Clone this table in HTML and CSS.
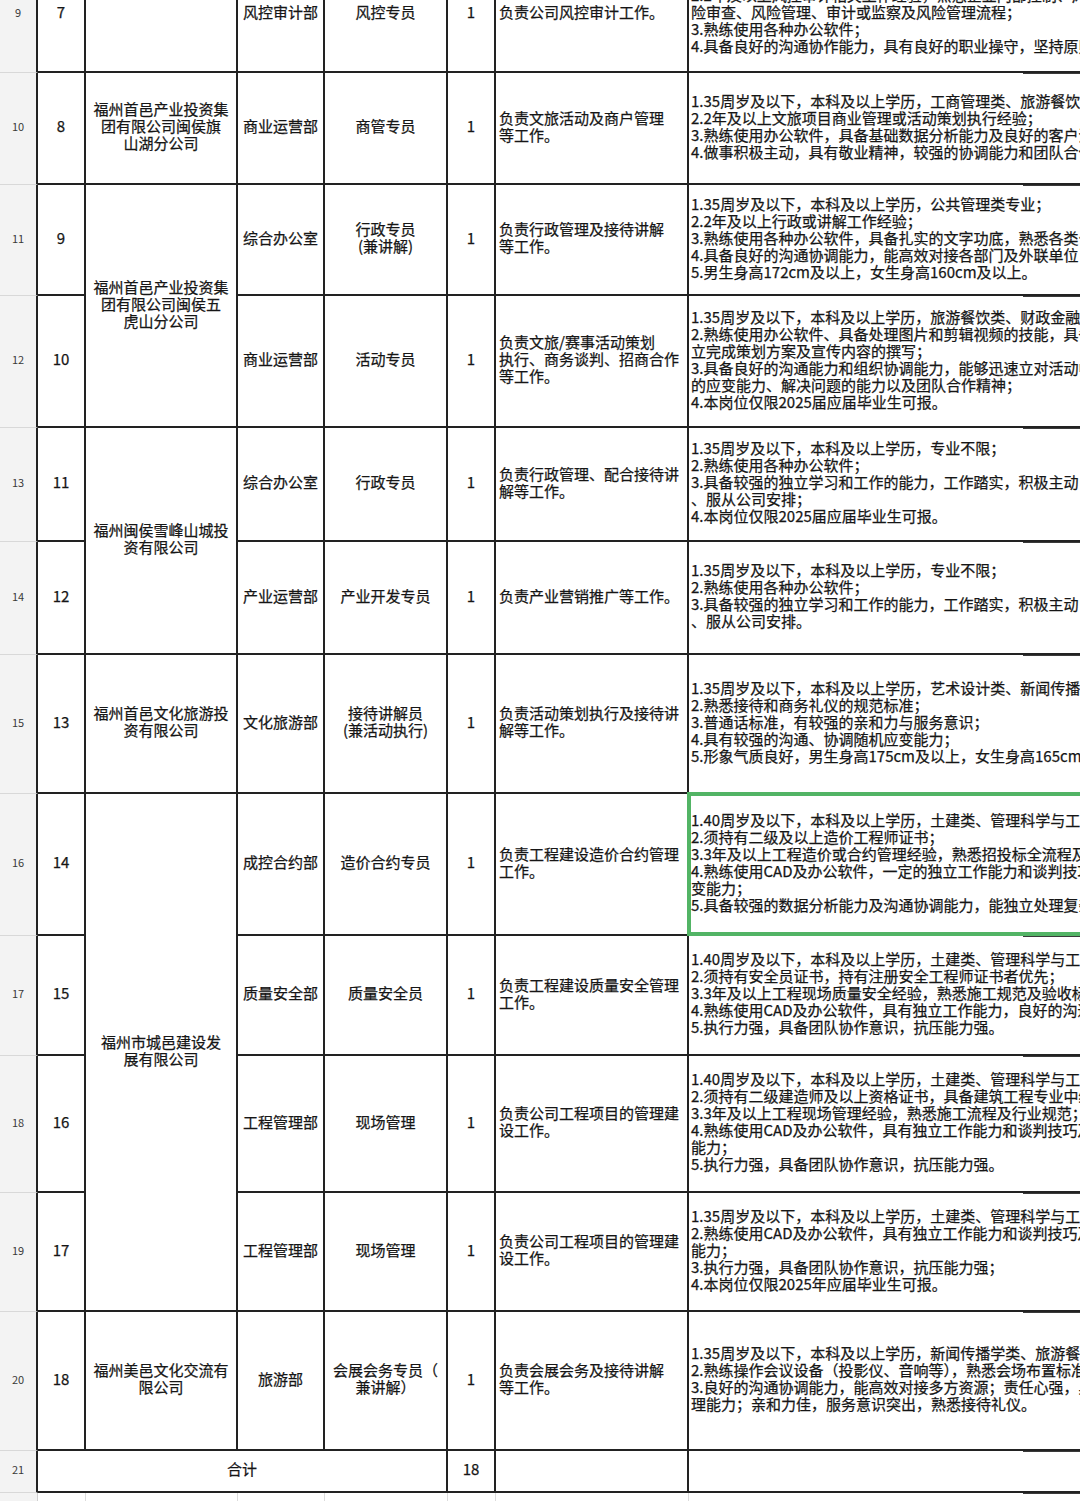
FILE: index.html
```html
<!DOCTYPE html>
<html lang="zh-CN">
<head>
<meta charset="utf-8">
<title>招聘岗位表</title>
<link rel="stylesheet" href="styles.css">
</head>
<body>
<div class="sheet">
  <!-- row 9 -->
  <div class="rh">9</div>
  <div class="c ctr">7</div>
  <div class="c ctr"></div>
  <div class="c ctr">风控审计部</div>
  <div class="c ctr">风控专员</div>
  <div class="c ctr">1</div>
  <div class="c duty">负责公司风控审计工作。</div>
  <div class="c req first">1.35周岁及以下，本科及以上学历，审计学、财务管理、法学类专业；<br>2.2年及以上风控审计相关工作经验，熟悉企业内部控制、风<br>险审查、风险管理、审计或监察及风险管理流程；<br>3.熟练使用各种办公软件；<br>4.具备良好的沟通协作能力，具有良好的职业操守，坚持原则。</div>

  <!-- row 10 -->
  <div class="rh">10</div>
  <div class="c ctr">8</div>
  <div class="c ctr">福州首邑产业投资集<br>团有限公司闽侯旗<br>山湖分公司</div>
  <div class="c ctr">商业运营部</div>
  <div class="c ctr">商管专员</div>
  <div class="c ctr">1</div>
  <div class="c duty">负责文旅活动及商户管理<br>等工作。</div>
  <div class="c req">1.35周岁及以下，本科及以上学历，工商管理类、旅游餐饮类专业；<br>2.2年及以上文旅项目商业管理或活动策划执行经验；<br>3.熟练使用办公软件，具备基础数据分析能力及良好的客户沟通能力；<br>4.做事积极主动，具有敬业精神，较强的协调能力和团队合作精神。</div>

  <!-- row 11 -->
  <div class="rh">11</div>
  <div class="c ctr">9</div>
  <div class="c ctr span2">福州首邑产业投资集<br>团有限公司闽侯五<br>虎山分公司</div>
  <div class="c ctr">综合办公室</div>
  <div class="c ctr">行政专员<br>(兼讲解)</div>
  <div class="c ctr">1</div>
  <div class="c duty">负责行政管理及接待讲解<br>等工作。</div>
  <div class="c req">1.35周岁及以下，本科及以上学历，公共管理类专业；<br>2.2年及以上行政或讲解工作经验；<br>3.熟练使用各种办公软件，具备扎实的文字功底，熟悉各类公文写作；<br>4.具备良好的沟通协调能力，能高效对接各部门及外联单位；<br>5.男生身高172cm及以上，女生身高160cm及以上。</div>

  <!-- row 12 -->
  <div class="rh">12</div>
  <div class="c ctr">10</div>
  <div class="c ctr">商业运营部</div>
  <div class="c ctr">活动专员</div>
  <div class="c ctr">1</div>
  <div class="c duty">负责文旅/赛事活动策划<br>执行、商务谈判、招商合作<br>等工作。</div>
  <div class="c req">1.35周岁及以下，本科及以上学历，旅游餐饮类、财政金融类专业；<br>2.熟练使用办公软件、具备处理图片和剪辑视频的技能，具备独<br>立完成策划方案及宣传内容的撰写；<br>3.具备良好的沟通能力和组织协调能力，能够迅速立对活动中突发<br>的应变能力、解决问题的能力以及团队合作精神；<br>4.本岗位仅限2025届应届毕业生可报。</div>

  <!-- row 13 -->
  <div class="rh">13</div>
  <div class="c ctr">11</div>
  <div class="c ctr span2">福州闽侯雪峰山城投<br>资有限公司</div>
  <div class="c ctr">综合办公室</div>
  <div class="c ctr">行政专员</div>
  <div class="c ctr">1</div>
  <div class="c duty">负责行政管理、配合接待讲<br>解等工作。</div>
  <div class="c req">1.35周岁及以下，本科及以上学历，专业不限；<br>2.熟练使用各种办公软件；<br>3.具备较强的独立学习和工作的能力，工作踏实，积极主动<br>、服从公司安排；<br>4.本岗位仅限2025届应届毕业生可报。</div>

  <!-- row 14 -->
  <div class="rh">14</div>
  <div class="c ctr">12</div>
  <div class="c ctr">产业运营部</div>
  <div class="c ctr">产业开发专员</div>
  <div class="c ctr">1</div>
  <div class="c duty">负责产业营销推广等工作。</div>
  <div class="c req">1.35周岁及以下，本科及以上学历，专业不限；<br>2.熟练使用各种办公软件；<br>3.具备较强的独立学习和工作的能力，工作踏实，积极主动<br>、服从公司安排。</div>

  <!-- row 15 -->
  <div class="rh">15</div>
  <div class="c ctr">13</div>
  <div class="c ctr">福州首邑文化旅游投<br>资有限公司</div>
  <div class="c ctr">文化旅游部</div>
  <div class="c ctr">接待讲解员<br>(兼活动执行)</div>
  <div class="c ctr">1</div>
  <div class="c duty">负责活动策划执行及接待讲<br>解等工作。</div>
  <div class="c req">1.35周岁及以下，本科及以上学历，艺术设计类、新闻传播学类专业；<br>2.熟悉接待和商务礼仪的规范标准；<br>3.普通话标准，有较强的亲和力与服务意识；<br>4.具有较强的沟通、协调随机应变能力；<br>5.形象气质良好，男生身高175cm及以上，女生身高165cm及以上。</div>

  <!-- row 16 -->
  <div class="rh">16</div>
  <div class="c ctr">14</div>
  <div class="c ctr span4">福州市城邑建设发<br>展有限公司</div>
  <div class="c ctr">成控合约部</div>
  <div class="c ctr">造价合约专员</div>
  <div class="c ctr">1</div>
  <div class="c duty">负责工程建设造价合约管理<br>工作。</div>
  <div class="c req selected">1.40周岁及以下，本科及以上学历，土建类、管理科学与工程类专业；<br>2.须持有二级及以上造价工程师证书；<br>3.3年及以上工程造价或合约管理经验，熟悉招投标全流程及合同管理；<br>4.熟练使用CAD及办公软件，一定的独立工作能力和谈判技巧及应<br>变能力；<br>5.具备较强的数据分析能力及沟通协调能力，能独立处理复杂问题。<span class="sel-box"></span></div>

  <!-- row 17 -->
  <div class="rh">17</div>
  <div class="c ctr">15</div>
  <div class="c ctr">质量安全部</div>
  <div class="c ctr">质量安全员</div>
  <div class="c ctr">1</div>
  <div class="c duty">负责工程建设质量安全管理<br>工作。</div>
  <div class="c req">1.40周岁及以下，本科及以上学历，土建类、管理科学与工程类专业；<br>2.须持有安全员证书，持有注册安全工程师证书者优先；<br>3.3年及以上工程现场质量安全经验，熟悉施工规范及验收标准；<br>4.熟练使用CAD及办公软件，具有独立工作能力，良好的沟通能力；<br>5.执行力强，具备团队协作意识，抗压能力强。</div>

  <!-- row 18 -->
  <div class="rh">18</div>
  <div class="c ctr">16</div>
  <div class="c ctr">工程管理部</div>
  <div class="c ctr">现场管理</div>
  <div class="c ctr">1</div>
  <div class="c duty">负责公司工程项目的管理建<br>设工作。</div>
  <div class="c req">1.40周岁及以下，本科及以上学历，土建类、管理科学与工程类专业；<br>2.须持有二级建造师及以上资格证书，具备建筑工程专业中级职称；<br>3.3年及以上工程现场管理经验，熟悉施工流程及行业规范；<br>4.熟练使用CAD及办公软件，具有独立工作能力和谈判技巧及应变<br>能力；<br>5.执行力强，具备团队协作意识，抗压能力强。</div>

  <!-- row 19 -->
  <div class="rh">19</div>
  <div class="c ctr">17</div>
  <div class="c ctr">工程管理部</div>
  <div class="c ctr">现场管理</div>
  <div class="c ctr">1</div>
  <div class="c duty">负责公司工程项目的管理建<br>设工作。</div>
  <div class="c req">1.35周岁及以下，本科及以上学历，土建类、管理科学与工程类专业；<br>2.熟练使用CAD及办公软件，具有独立工作能力和谈判技巧及应变<br>能力；<br>3.执行力强，具备团队协作意识，抗压能力强；<br>4.本岗位仅限2025年应届毕业生可报。</div>

  <!-- row 20 -->
  <div class="rh">20</div>
  <div class="c ctr">18</div>
  <div class="c ctr">福州美邑文化交流有<br>限公司</div>
  <div class="c ctr">旅游部</div>
  <div class="c ctr">会展会务专员（<br>兼讲解）</div>
  <div class="c ctr">1</div>
  <div class="c duty">负责会展会务及接待讲解<br>等工作。</div>
  <div class="c req">1.35周岁及以下，本科及以上学历，新闻传播学类、旅游餐饮类专业；<br>2.熟练操作会议设备（投影仪、音响等），熟悉会场布置标准；<br>3.良好的沟通协调能力，能高效对接多方资源；责任心强，具备应急处<br>理能力；亲和力佳，服务意识突出，熟悉接待礼仪。</div>

  <!-- row 21 -->
  <div class="rh">21</div>
  <div class="c ctr total">合计</div>
  <div class="c ctr">18</div>
  <div class="c duty"></div>
  <div class="c req"></div>

  <!-- row 22 -->
  <div class="rh last"></div>
  <div class="g"></div>
  <div class="g"></div>
  <div class="g"></div>
  <div class="g"></div>
  <div class="g"></div>
  <div class="g"></div>
  <div class="g"></div>
</div>
</body>
</html>
```

FILE: styles.css
```css
html, body {
  margin: 0;
  padding: 0;
  background: #ffffff;
  overflow: hidden;
}

body {
  width: 1080px;
  height: 1501px;
  font-family: "Noto Sans CJK SC", "Noto Sans", sans-serif;
  color: #161616;
}

.sheet {
  display: grid;
  width: max-content;
  margin-top: -43px;
  grid-template-columns: 38px 48px 152px 87px 123px 48px 193px 440px;
  grid-template-rows: 116px 112px 111px 132px 114px 113px 139px 142px 120px 137px 119px 139px 42px 40px;
  font-size: 15px;
  line-height: 17px;
  -webkit-text-stroke: 0.25px currentColor;
}

.rh {
  box-sizing: border-box;
  background: #f3f3f3;
  border-right: 2px solid #222222;
  border-bottom: 1px solid #d8d8d8;
  display: flex;
  align-items: center;
  justify-content: center;
  font-size: 11px;
  color: #3a3a3a;
  padding-bottom: 4px;
  -webkit-text-stroke: 0;
}

.rh.last {
  border-right: 1px solid #d0d0d0;
  border-bottom: none;
}

.c {
  box-sizing: border-box;
  border-right: 2px solid #222222;
  border-bottom: 2px solid #222222;
  display: flex;
  align-items: center;
  padding-bottom: 5px;
  position: relative;
}

.ctr {
  justify-content: center;
  text-align: center;
  padding-left: 3px;
  padding-right: 3px;
}

.duty {
  padding-left: 3px;
  white-space: nowrap;
}

.req {
  padding-left: 2px;
  white-space: nowrap;
}

.req.first {
  padding-bottom: 6px;
}

.req::after {
  content: "";
  position: absolute;
  left: 334px;
  right: 0;
  bottom: -3px;
  height: 1px;
  background: #3a3a3a;
}

.span2 {
  grid-row: span 2;
}

.span4 {
  grid-row: span 4;
}

.total {
  grid-column: span 4;
}

.g {
  border-right: 1px solid #dcdcdc;
}

.sel-box {
  position: absolute;
  top: -2px;
  left: -2px;
  right: -4px;
  bottom: -2px;
  border: 4px solid #52b465;
  pointer-events: none;
}
```
